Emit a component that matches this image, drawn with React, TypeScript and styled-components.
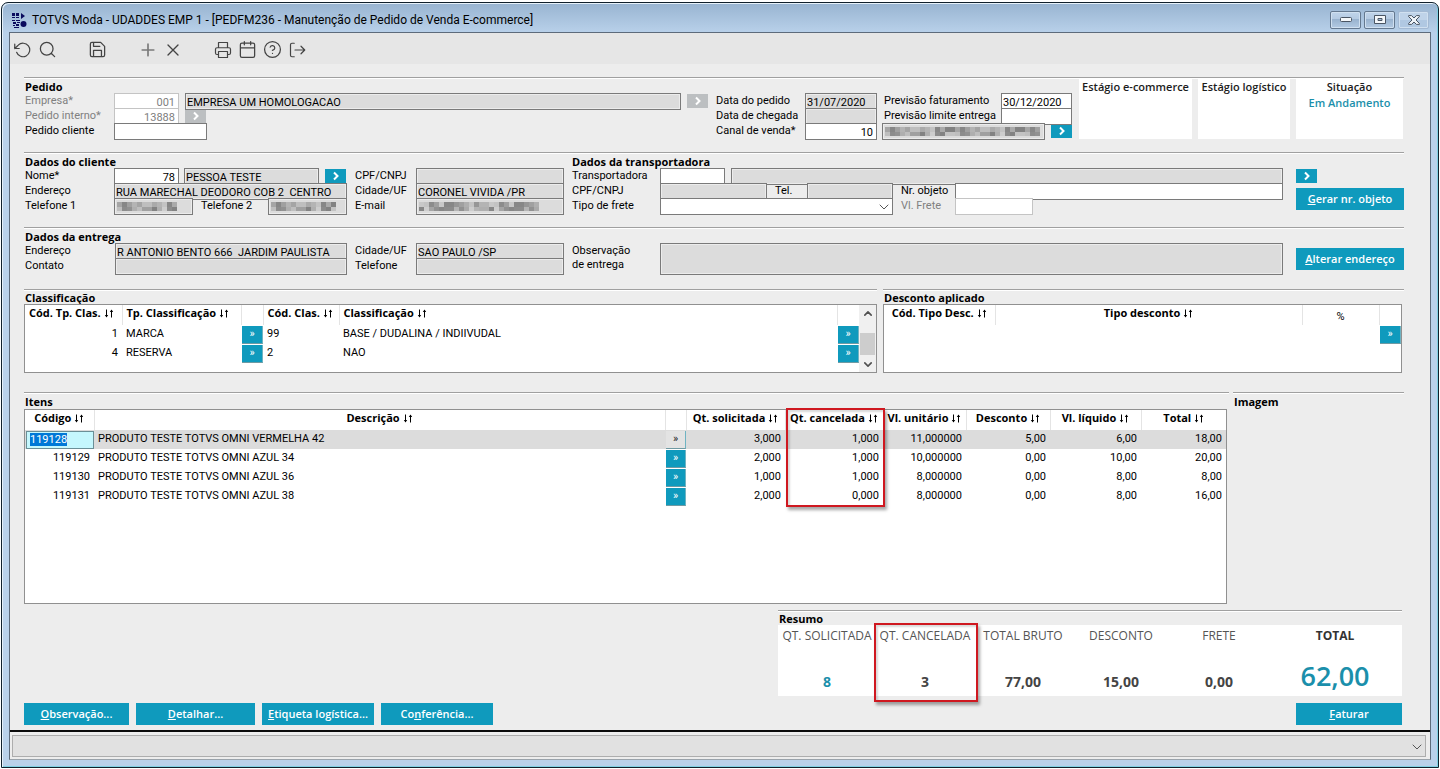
import React, { useEffect, useRef } from 'react';
import styled, { createGlobalStyle, css } from 'styled-components';

const sans = `Roboto, "Liberation Sans", Arial, sans-serif`;
const humanist = `"Open Sans", "Noto Sans", sans-serif`;
const teal = '#0f9abd';

const GlobalStyle = createGlobalStyle`
  *, *::before, *::after { box-sizing: border-box; }
  body { margin: 0; background: #ffffff; color: #000; font: 11px/15px ${sans}; }
  button, input, select, textarea { font: inherit; color: inherit; border-radius: 0; margin: 0; }
`;

/* ---------- window frame ---------- */

const Desktop = styled.div`
  display: flex;
  min-height: 100vh;
  padding: 2px 1px 1px;
`;

const WindowFrame = styled.div`
  flex: 1;
  min-width: 1200px;
  display: flex;
  flex-direction: column;
  padding: 0 7px 7px;
  border: 1px solid #10202c;
  border-radius: 7px 7px 0 0;
  background: linear-gradient(#98b4d1 0, #b9d1ea 30px);
  box-shadow: inset 1px 1px 0 #e6f1fa, inset -1px -1px 0 #7fd0e2;
`;

const TitleBar = styled.header`
  display: flex;
  align-items: center;
  height: 29px;
  padding: 5px 2px 0 3px;
  gap: 5px;
`;

const WindowTitle = styled.h1`
  flex: 1;
  margin: 0;
  font: 400 12px/18px ${sans};
`;

const WindowControls = styled.div`
  display: flex;
  gap: 3px;
`;

const ControlButton = styled.button<{ $soft?: boolean }>`
  display: flex;
  align-items: center;
  justify-content: center;
  width: 31px;
  height: 18px;
  padding: 0;
  border: 1px solid ${p => (p.$soft ? '#a3b9d3' : '#64788f')};
  border-radius: 2px;
  background: ${p =>
    p.$soft
      ? 'linear-gradient(#bfd3e9 50%, #b0c8e2 50%)'
      : 'linear-gradient(#c0d4ea 0%, #b4cae2 45%, #98b2ce 45%, #b3cae3 100%)'};
  box-shadow: inset 0 0 0 1px #d0e0f0;
`;

const Panel = styled.main`
  flex: 1;
  display: flex;
  flex-direction: column;
  border: 1px solid #5d6b7b;
  border-bottom-color: #9aa3ab;
  background: #ededed;
`;

const Toolbar = styled.div`
  display: flex;
  height: 31px;
  padding-top: 2px;
  align-items: center;
  background: #e6e6e6;
`;

const ToolButton = styled.button<{ $spaced?: boolean; $faint?: boolean }>`
  display: flex;
  align-items: center;
  justify-content: center;
  width: 25px;
  height: 25px;
  padding: 0;
  margin-left: ${p => (p.$spaced ? 25 : 0)}px;
  border: 0;
  background: none;
  color: ${p => (p.$faint ? '#7a7a7a' : '#444')};
`;

const Glyph = styled.svg`
  display: block;
  flex: none;
  fill: none;
  stroke: currentColor;
  stroke-linecap: round;
  stroke-linejoin: round;
`;

const Content = styled.div`
  flex: 1;
  display: flex;
  flex-direction: column;
  padding: 13px 26px 5px 14px;
`;

/* ---------- form parts ---------- */

const ruled = css`
  border-top: 1px solid #a0a0a0;
  box-shadow: inset 0 1px 0 #ffffff;
`;

const Section = styled.section<{ $height?: number }>`
  ${ruled}
  display: flex;
  align-items: flex-start;
  min-height: ${p => p.$height ?? 75}px;
`;

const SectionTitle = styled.h2`
  height: 15px;
  margin: 0;
  padding: 1px 0 0 1px;
  font: 700 11px/15px ${humanist};
  white-space: nowrap;
`;

const Column = styled.div<{ $width?: number; $left?: number }>`
  flex: ${p => (p.$width ? `0 0 ${p.$width}px` : '1 1 0')};
  min-width: 0;
  margin-left: ${p => p.$left ?? 0}px;
`;

const Line = styled.div`
  display: flex;
  height: 15px;
`;

const Caption = styled.label<{ $width: number; $muted?: boolean; $indent?: number; $stacked?: boolean }>`
  flex: 0 0 ${p => p.$width}px;
  padding-left: ${p => p.$indent ?? 1}px;
  line-height: ${p => (p.$stacked ? 14 : 16)}px;
  padding-top: ${p => (p.$stacked ? 1 : 0)}px;
  white-space: nowrap;
  color: ${p => (p.$muted ? '#808080' : '#000')};
`;

const fieldLook = css<{ $locked?: boolean; $faint?: boolean }>`
  border: 1px solid ${p => (p.$faint ? '#c4c4c4' : '#7a7a7a')};
  background: ${p => (p.$locked ? '#dcdcdc' : '#ffffff')};
  box-shadow: ${p => (p.$locked ? 'inset 0 0 0 1px #ececec' : 'none')};
  outline: none;
`;

const Field = styled.input<{
  $width?: number;
  $left?: number;
  $locked?: boolean;
  $faint?: boolean;
  $right?: boolean;
}>`
  ${fieldLook}
  position: relative;
  flex: ${p => (p.$width ? `0 0 ${p.$width}px` : '1 1 0')};
  min-width: 0;
  width: ${p => (p.$width ? `${p.$width}px` : 'auto')};
  height: 17px;
  margin-left: ${p => p.$left ?? 0}px;
  padding: 1px ${p => (p.$right ? 3 : 1)}px 0;
  text-align: ${p => (p.$right ? 'right' : 'left')};
  color: ${p => (p.$faint ? '#808080' : '#000')};
`;

const Notes = styled.textarea`
  ${fieldLook}
  flex: 1;
  height: 32px;
  resize: none;
`;

const MaskedBox = styled.div<{ $width: number; $left?: number }>`
  position: relative;
  display: flex;
  flex: 0 0 ${p => p.$width}px;
  min-width: 0;
  height: 17px;
  margin-left: ${p => p.$left ?? 0}px;
`;

const MaskSvg = styled.svg`
  position: absolute;
  left: 3px;
  top: 4px;
`;

const SelectBox = styled.div<{ $width?: number }>`
  position: relative;
  display: flex;
  flex: ${p => (p.$width ? `0 0 ${p.$width}px` : '1')};
`;

const Select = styled.select<{ $bar?: boolean }>`
  flex: 1;
  height: ${p => (p.$bar ? 22 : 17)}px;
  appearance: none;
  border: 1px solid ${p => (p.$bar ? '#adadad' : '#7a7a7a')};
  background: ${p => (p.$bar ? '#e1e1e1' : '#fff')};
`;

const SelectChevron = styled(Glyph)`
  position: absolute;
  right: 4px;
  top: 50%;
  margin-top: -2px;
  pointer-events: none;
  color: #555;
`;

const GoButton = styled.button<{ $left?: number; $off?: boolean }>`
  display: flex;
  align-items: center;
  justify-content: center;
  flex: 0 0 21px;
  width: 21px;
  height: 14px;
  margin: 1px 0 0 ${p => p.$left ?? 0}px;
  padding: 0;
  border: 0;
  background: ${p => (p.$off ? '#bcbfc1' : teal)};
  color: #fff;
`;

const ActionButton = styled.button<{ $width: number; $top?: number }>`
  width: ${p => p.$width}px;
  height: 22px;
  margin-top: ${p => p.$top ?? 0}px;
  padding: 0;
  border: 0;
  background: ${teal};
  color: #fff;
  font: 600 11px/22px ${humanist};
  white-space: nowrap;
`;

const StageCards = styled.div`
  display: grid;
  grid-template-columns: 113px 92px 107px;
  gap: 6px;
  margin: 1px 1px 0 7px;
`;

const StageCard = styled.div`
  height: 60px;
  background: #fff;
  color: #1c1c1c;
  font: 600 11px/16px ${humanist};
  text-align: center;
  white-space: nowrap;
`;

const StageValue = styled.div`
  color: #1b8fab;
`;

/* ---------- grids ---------- */

const Split = styled.div`
  display: flex;
  gap: 6px;
`;

const ItemsSplit = styled.div`
  flex: 1;
  display: flex;
  gap: 4px;
  min-height: 212px;
  margin-top: 19px;
`;

const GridBlock = styled.section<{ $width?: number; $right?: number }>`
  ${ruled}
  display: flex;
  flex-direction: column;
  flex: ${p => (p.$width ? `0 0 ${p.$width}px` : '1 1 0')};
  min-width: 0;
  padding-right: ${p => p.$right ?? 0}px;
`;

const GridTitle = styled.h2<{ $tall?: boolean }>`
  height: ${p => (p.$tall ? 16 : 14)}px;
  margin: 0;
  padding: ${p => (p.$tall ? 1 : 0)}px 0 0 1px;
  font: 700 11px/15px ${humanist};
  white-space: nowrap;
`;

const GridFrame = styled.div<{ $height?: number }>`
  display: flex;
  align-items: stretch;
  flex: ${p => (p.$height ? 'none' : '1')};
  height: ${p => (p.$height ? `${p.$height}px` : 'auto')};
  border: 1px solid #909090;
  background: #fff;
`;

const GridScroll = styled.div`
  flex: 1;
  min-width: 0;
`;

const Table = styled.table`
  width: 100%;
  table-layout: fixed;
  border-collapse: collapse;
`;

const HeadCell = styled.th<{ $start?: boolean; $plain?: boolean }>`
  position: relative;
  height: 20px;
  padding: ${p => (p.$plain ? '2px 2px 0' : p.$start ? '0 0 5px 4px' : '0 2px 5px')};
  border-left: 1px solid #e4e4e4;
  font: ${p => (p.$plain ? `400 11px/15px ${sans}` : `700 11px/15px ${humanist}`)};
  text-align: ${p => (p.$start ? 'left' : 'center')};
  white-space: nowrap;
  &:first-child { border-left: 0; }
`;

const BodyRow = styled.tr<{ $active?: boolean }>`
  height: 19px;
  background: ${p => (p.$active ? '#dcdcdc' : 'transparent')};
`;

const Cell = styled.td<{ $right?: boolean; $flush?: boolean }>`
  height: 19px;
  padding: ${p => (p.$flush ? '0 0 0 1px' : '0 4px 2px')};
  text-align: ${p => (p.$right ? 'right' : 'left')};
  line-height: 15px;
  white-space: nowrap;
`;

const MoreButton = styled.button<{ $off?: boolean }>`
  display: block;
  width: 100%;
  height: 18px;
  padding: 0;
  border: 0;
  border-right: 1px solid #6fb3c2;
  border-bottom: 1px solid #6f9aa3;
  background: ${p => (p.$off ? '#e3e3e3' : teal)};
  color: ${p => (p.$off ? '#222' : '#fff')};
  font: 11px/16px ${sans};
`;

const CodeInput = styled.input`
  display: block;
  width: 100%;
  height: 18px;
  padding: 0 3px;
  border: 1px solid #6b8f97;
  background: #c5f7fd;
  outline: none;
  line-height: 13px;
  &::selection { background: #0078d7; color: #fff; }
`;

const ScrollBar = styled.div`
  display: flex;
  flex-direction: column;
  align-items: center;
  justify-content: space-between;
  width: 17px;
  padding: 6px 1px 5px;
  background: #f0f0f0;
  color: #505050;
`;

const ScrollThumb = styled.div`
  align-self: stretch;
  height: 22px;
  margin-top: 10px;
  background: #cdcdcd;
`;

const highlight = css`
  position: absolute;
  z-index: 2;
  border: 2px solid #cf1820;
  box-shadow: 2px 3px 3px rgba(0, 0, 0, 0.35), inset 2px 2px 2px rgba(0, 0, 0, 0.15);
  pointer-events: none;
`;

const ColumnHighlight = styled.span`
  ${highlight}
  top: -2px;
  left: 0;
  right: -2px;
  height: 99px;
`;

const SummaryHighlight = styled.span`
  ${highlight}
  top: -2px;
  bottom: -6px;
  left: -2px;
  right: -4px;
`;

/* ---------- summary and footer ---------- */

const Bottom = styled.div`
  display: flex;
  justify-content: space-between;
  align-items: flex-end;
  margin-top: 6px;
  padding-right: 2px;
`;

const ButtonRow = styled.div`
  display: flex;
  gap: 7px;
`;

const SummaryBlock = styled.section`
  ${ruled}
  display: flex;
  flex-direction: column;
  width: 624px;
`;

const SummaryGrid = styled.dl`
  display: grid;
  grid-template-columns: repeat(5, 98px) 1fr;
  margin: 0 0 7px;
  background: #fff;
`;

const SummaryItem = styled.div`
  position: relative;
  height: 71px;
  display: flex;
  flex-direction: column;
  justify-content: space-between;
  align-items: center;
  padding: 2px 0 4px;
  font-family: ${humanist};
`;

const SummaryLabel = styled.dt<{ $strong?: boolean }>`
  font-size: 12px;
  line-height: 17px;
  font-weight: ${p => (p.$strong ? 700 : 400)};
  color: ${p => (p.$strong ? '#333' : '#555')};
  white-space: nowrap;
`;

const SummaryValue = styled.dd<{ $accent?: boolean; $large?: boolean }>`
  margin: 0;
  font-size: ${p => (p.$large ? 27 : 14)}px;
  line-height: ${p => (p.$large ? 32 : 20)}px;
  font-weight: ${p => (p.$large ? 600 : 700)};
  color: ${p => (p.$accent ? '#1b8fab' : '#444')};
`;

const FaturarRow = styled.div`
  display: flex;
  justify-content: flex-end;
`;

const StatusBar = styled.footer`
  display: flex;
  padding: 3px 4px 2px 2px;
  border-top: 2px solid #0a0a0a;
`;

/* ---------- small pieces ---------- */

const Arrow = () => (
  <Glyph width="8" height="10" viewBox="0 0 8 10" strokeWidth="2">
    <path d="M2 1.5 5.5 5 2 8.5" strokeLinecap="butt" strokeLinejoin="miter" />
  </Glyph>
);

const Chevron = ({ up = false }: { up?: boolean }) => (
  <Glyph width="8" height="5" viewBox="0 0 10 6" strokeWidth="2">
    <path d={up ? 'M1 5 5 1 9 5' : 'M1 1 5 5 9 1'} />
  </Glyph>
);

const SortMark = styled.svg`
  margin-left: 3px;
  vertical-align: -1px;
`;

const Sort = () => (
  <SortMark width="10" height="9" viewBox="0 0 10 9" aria-hidden="true">
    <path d="M2.5 0.5V8M7.5 8.5V1" stroke="#000" strokeWidth="1" />
    <path d="M0.8 6h3.4L2.5 8.5zM5.8 3h3.4L7.5 0.5z" fill="#000" />
  </SortMark>
);

const Go = ({ label, left, off }: { label: string; left?: number; off?: boolean }) => (
  <GoButton type="button" aria-label={label} $left={left} $off={off}>
    <Arrow />
  </GoButton>
);

const shades = [190, 150, 170, 205, 140, 160, 180, 130, 200, 165, 145, 175, 195, 135];

function Masked({ id, label, width, left, cover }: {
  id: string; label?: string; width: number; left?: number; cover: number;
}) {
  const cells = [];
  for (let row = 0; row < 2; row++) {
    for (let col = 0; col * 5 < cover; col++) {
      const v = shades[(col * 3 + row * 5 + ((col * col) % 7) + width) % shades.length];
      cells.push(
        <rect key={`${row}-${col}`} x={col * 5} y={row * 5} width="5" height="5" fill={`rgb(${v},${v},${v})`} />
      );
    }
  }
  return (
    <MaskedBox $width={width} $left={left}>
      <Field id={id} aria-label={label} readOnly $locked />
      <MaskSvg width={cover} height="9" shapeRendering="crispEdges" aria-hidden="true">{cells}</MaskSvg>
    </MaskedBox>
  );
}

function Head({ children, start, marked }: { children: string; start?: boolean; marked?: boolean }) {
  return (
    <HeadCell $start={start}>
      {children}
      <Sort />
      {marked && <ColumnHighlight />}
    </HeadCell>
  );
}

type Tool = { name: string; size: number; d: string; spaced?: boolean; faint?: boolean };

const tools: Tool[] = [
  { name: 'Desfazer', size: 18, d: 'M1 4v6h6M3.5 15a9 9 0 1 0 2.1-9.4L1 10' },
  { name: 'Pesquisar', size: 19, d: 'M19 11a8 8 0 1 1-16 0 8 8 0 0 1 16 0zM21 21l-4.3-4.3' },
  { name: 'Salvar', size: 19, spaced: true, d: 'M19 21H5a2 2 0 0 1-2-2V5a2 2 0 0 1 2-2h11l5 5v11a2 2 0 0 1-2 2zM17 21v-8H7v8M7 3v5h8' },
  { name: 'Incluir', size: 20, spaced: true, faint: true, d: 'M12 5v14M5 12h14' },
  { name: 'Excluir', size: 20, d: 'M18 6 6 18M6 6l12 12' },
  { name: 'Imprimir', size: 18, spaced: true, d: 'M6 9V2h12v7M6 18H4a2 2 0 0 1-2-2v-5a2 2 0 0 1 2-2h16a2 2 0 0 1 2 2v5a2 2 0 0 1-2 2h-2M6 14h12v8H6z' },
  { name: 'Agenda', size: 19, d: 'M5 4h14a2 2 0 0 1 2 2v14a2 2 0 0 1-2 2H5a2 2 0 0 1-2-2V6a2 2 0 0 1 2-2zM16 2v4M8 2v4M3 10h18' },
  { name: 'Ajuda', size: 19, d: 'M22 12a10 10 0 1 1-20 0 10 10 0 0 1 20 0zM9.1 9a3 3 0 0 1 5.8 1c0 2-3 3-3 3M12 17h.01' },
  { name: 'Sair', size: 18, d: 'M7 21H4a2 2 0 0 1-2-2V5a2 2 0 0 1 2-2h3M16 17l5-5-5-5M21 12H8' },
];

const items = [
  ['119128', 'PRODUTO TESTE TOTVS OMNI VERMELHA 42', '3,000', '1,000', '11,000000', '5,00', '6,00', '18,00'],
  ['119129', 'PRODUTO TESTE TOTVS OMNI AZUL 34', '2,000', '1,000', '10,000000', '0,00', '10,00', '20,00'],
  ['119130', 'PRODUTO TESTE TOTVS OMNI AZUL 36', '1,000', '1,000', '8,000000', '0,00', '8,00', '8,00'],
  ['119131', 'PRODUTO TESTE TOTVS OMNI AZUL 38', '2,000', '0,000', '8,000000', '0,00', '8,00', '16,00'],
];

const classes = [
  ['1', 'MARCA', '99', 'BASE / DUDALINA / INDIIVUDAL'],
  ['4', 'RESERVA', '2', 'NAO'],
];

const summary = [
  { label: 'QT. SOLICITADA', value: '8', accent: true },
  { label: 'QT. CANCELADA', value: '3', marked: true },
  { label: 'TOTAL BRUTO', value: '77,00' },
  { label: 'DESCONTO', value: '15,00' },
  { label: 'FRETE', value: '0,00' },
  { label: 'TOTAL', value: '62,00', accent: true, large: true },
];

function AppLogo() {
  return (
    <svg width="15" height="15" viewBox="0 0 15 15" fill="#0b0b5e" aria-hidden="true">
      <path d="M0 0h3v3H0zM4 0h3v3H4zM0 4h3v1H0zM4 4h3v1H4zM9 0l4 3-4 3zM0 7h3v1H0zM4 7h4v1H4zM1 9h3v2H1zM5 9h3v1H5zM1 12h2v1H1zM4 11h3v2H4zM2 14h5v1H2z" />
      <circle cx="11.500" cy="11" r="3" />
    </svg>
  );
}

export default function App() {
  const code = useRef<HTMLInputElement>(null);
  useEffect(() => {
    code.current?.focus();
    code.current?.select();
  }, []);

  return (
    <Desktop>
      <GlobalStyle />
      <WindowFrame>
        <TitleBar>
          <AppLogo />
          <WindowTitle>TOTVS Moda - UDADDES EMP 1 - [PEDFM236 - Manutenção de Pedido de Venda E-commerce]</WindowTitle>
          <WindowControls>
            <ControlButton type="button" aria-label="Minimizar">
              <svg width="12" height="6"><rect x="0.5" y="0.5" width="11" height="4" rx="1" fill="#f4f7fa" stroke="#4a5563" /></svg>
            </ControlButton>
            <ControlButton type="button" aria-label="Restaurar">
              <svg width="12" height="10"><path d="M.5.5h11v8H.5z" fill="#f4f7fa" stroke="#4a5563" /><path d="M4 3.500h4v2H4z" fill="#a9c0da" stroke="#4a5563" /></svg>
            </ControlButton>
            <ControlButton type="button" aria-label="Fechar" $soft>
              <svg width="12" height="10" viewBox="0 0 12 10"><path d="M.6.6h3L6 3 8.400.6h3v1L8 5l3.400 3.400v1h-3L6 7 3.600 9.400h-3v-1L4 5 .6 1.600z" fill="#eef3f8" stroke="#4a5563" /></svg>
            </ControlButton>
          </WindowControls>
        </TitleBar>

        <Panel>
          <Toolbar>
            {tools.map(t => (
              <ToolButton key={t.name} type="button" aria-label={t.name} $spaced={t.spaced} $faint={t.faint}>
                <Glyph width={t.size} height={t.size} viewBox="0 0 24 24" strokeWidth={t.faint ? 2 : 1.6}>
                  <path d={t.d} />
                </Glyph>
              </ToolButton>
            ))}
          </Toolbar>

          <Content>
            <Section>
              <Column>
                <SectionTitle>Pedido</SectionTitle>
                <Line>
                  <Caption htmlFor="empresa" $width={90} $muted>Empresa*</Caption>
                  <Field id="empresa" $width={65} $right $faint defaultValue="001" />
                  <Field aria-label="Nome da empresa" $left={6} $locked readOnly defaultValue="EMPRESA UM HOMOLOGACAO" />
                  <Go label="Abrir empresa" left={6} off />
                </Line>
                <Line>
                  <Caption htmlFor="interno" $width={90} $muted>Pedido interno*</Caption>
                  <Field id="interno" $width={65} $right $faint defaultValue="13888" />
                  <Go label="Abrir pedido" left={6} off />
                </Line>
                <Line>
                  <Caption htmlFor="pcliente" $width={90}>Pedido cliente</Caption>
                  <Field id="pcliente" $width={93} />
                </Line>
              </Column>
              <Column $width={357} $left={7}>
                <SectionTitle as="div" />
                <Line>
                  <Caption htmlFor="dpedido" $width={90}>Data do pedido</Caption>
                  <Field id="dpedido" $width={72} $locked readOnly defaultValue="31/07/2020" />
                  <Caption htmlFor="pfat" $width={124} $indent={7}>Previsão faturamento</Caption>
                  <Field id="pfat" defaultValue="30/12/2020" />
                </Line>
                <Line>
                  <Caption htmlFor="dchegada" $width={90}>Data de chegada</Caption>
                  <Field id="dchegada" $width={72} $locked readOnly />
                  <Caption htmlFor="plim" $width={124} $indent={7}>Previsão limite entrega</Caption>
                  <Field id="plim" />
                </Line>
                <Line>
                  <Caption htmlFor="canal" $width={90}>Canal de venda*</Caption>
                  <Field id="canal" $width={72} $right defaultValue="10" />
                  <Masked id="canaldesc" label="Descrição do canal" width={163} left={5} cover={155} />
                  <Go label="Abrir canal" left={6} />
                </Line>
              </Column>
              <StageCards>
                <StageCard>Estágio e-commerce</StageCard>
                <StageCard>Estágio logístico</StageCard>
                <StageCard>
                  Situação
                  <StageValue>Em Andamento</StageValue>
                </StageCard>
              </StageCards>
            </Section>

            <Section>
              <Column $width={323}>
                <SectionTitle>Dados do cliente</SectionTitle>
                <Line>
                  <Caption htmlFor="nome" $width={90}>Nome*</Caption>
                  <Field id="nome" $width={65} $right defaultValue="78" />
                  <Field aria-label="Nome do cliente" $left={5} $width={135} $locked readOnly defaultValue="PESSOA TESTE" />
                  <Go label="Abrir cliente" left={6} />
                </Line>
                <Line>
                  <Caption htmlFor="end" $width={90}>Endereço</Caption>
                  <Field id="end" $locked readOnly defaultValue="RUA MARECHAL DEODORO COB 2  CENTRO" />
                </Line>
                <Line>
                  <Caption htmlFor="tel1" $width={90}>Telefone 1</Caption>
                  <Masked id="tel1" width={79} cover={60} />
                  <Caption htmlFor="tel2" $width={75} $indent={8}>Telefone 2</Caption>
                  <Masked id="tel2" width={79} cover={65} />
                </Line>
              </Column>
              <Column $width={210} $left={7}>
                <SectionTitle as="div" />
                <Line>
                  <Caption htmlFor="cpf" $width={62}>CPF/CNPJ</Caption>
                  <Field id="cpf" $locked readOnly />
                </Line>
                <Line>
                  <Caption htmlFor="cid" $width={62}>Cidade/UF</Caption>
                  <Field id="cid" $locked readOnly defaultValue="CORONEL VIVIDA /PR" />
                </Line>
                <Line>
                  <Caption htmlFor="mail" $width={62}>E-mail</Caption>
                  <Masked id="mail" width={148} cover={120} />
                </Line>
              </Column>
              <Column $left={7}>
                <SectionTitle>Dados da transportadora</SectionTitle>
                <Line>
                  <Caption htmlFor="transp" $width={89}>Transportadora</Caption>
                  <Field id="transp" $width={65} />
                  <Field aria-label="Nome da transportadora" $left={6} $locked readOnly />
                </Line>
                <Line>
                  <Caption htmlFor="tcpf" $width={89}>CPF/CNPJ</Caption>
                  <Field id="tcpf" $width={107} $locked readOnly />
                  <Caption htmlFor="ttel" $width={40} $indent={8}>Tel.</Caption>
                  <Field id="ttel" $width={86} $locked readOnly />
                  <Caption htmlFor="objeto" $width={62} $indent={8}>Nr. objeto</Caption>
                  <Field id="objeto" />
                </Line>
                <Line>
                  <Caption htmlFor="frete" $width={89}>Tipo de frete</Caption>
                  <SelectBox $width={233}>
                    <Select id="frete" />
                    <SelectChevron width="10" height="6" viewBox="0 0 10 6" strokeWidth="1"><path d="M1 1 5 5 9 1" /></SelectChevron>
                  </SelectBox>
                  <Caption htmlFor="vfrete" $width={62} $muted $indent={8}>Vl. Frete</Caption>
                  <Field id="vfrete" $width={78} $faint />
                </Line>
              </Column>
              <Column $width={108} $left={13}>
                <SectionTitle as="div" />
                <Line><Go label="Abrir transportadora" /></Line>
                <ActionButton type="button" $width={108} $top={5}><u>G</u>erar nr. objeto</ActionButton>
              </Column>
            </Section>

            <Section $height={62}>
              <Column $width={323}>
                <SectionTitle>Dados da entrega</SectionTitle>
                <Line>
                  <Caption htmlFor="eend" $width={91}>Endereço</Caption>
                  <Field id="eend" $locked readOnly defaultValue="R ANTONIO BENTO 666  JARDIM PAULISTA" />
                </Line>
                <Line>
                  <Caption htmlFor="econt" $width={91}>Contato</Caption>
                  <Field id="econt" $locked readOnly />
                </Line>
              </Column>
              <Column $width={210} $left={7}>
                <SectionTitle as="div" />
                <Line>
                  <Caption htmlFor="ecid" $width={62}>Cidade/UF</Caption>
                  <Field id="ecid" $locked readOnly defaultValue="SAO PAULO /SP" />
                </Line>
                <Line>
                  <Caption htmlFor="etel" $width={62}>Telefone</Caption>
                  <Field id="etel" $locked readOnly />
                </Line>
              </Column>
              <Column $left={7}>
                <SectionTitle as="div" />
                <Line>
                  <Caption htmlFor="obs" $width={89} $stacked>Observação<br />de entrega</Caption>
                  <Notes id="obs" $locked readOnly />
                </Line>
              </Column>
              <Column $width={108} $left={13}>
                <ActionButton type="button" $width={108} $top={20}><u>A</u>lterar endereço</ActionButton>
              </Column>
            </Section>

            <Split>
              <GridBlock>
                <GridTitle>Classificação</GridTitle>
                <GridFrame $height={69}>
                  <GridScroll>
                    <Table>
                      <colgroup>
                        <col style={{ width: 97 }} /><col style={{ width: 119 }} /><col style={{ width: 22 }} />
                        <col style={{ width: 76 }} /><col /><col style={{ width: 22 }} />
                      </colgroup>
                      <thead>
                        <tr>
                          <Head start>Cód. Tp. Clas.</Head>
                          <Head start>Tp. Classificação</Head>
                          <HeadCell />
                          <Head start>Cód. Clas.</Head>
                          <Head start>Classificação</Head>
                          <HeadCell />
                        </tr>
                      </thead>
                      <tbody>
                        {classes.map(([tp, tpName, cod, name]) => (
                          <BodyRow key={tp}>
                            <Cell $right>{tp}</Cell>
                            <Cell>{tpName}</Cell>
                            <Cell $flush><MoreButton type="button">»</MoreButton></Cell>
                            <Cell>{cod}</Cell>
                            <Cell>{name}</Cell>
                            <Cell $flush><MoreButton type="button">»</MoreButton></Cell>
                          </BodyRow>
                        ))}
                      </tbody>
                    </Table>
                  </GridScroll>
                  <ScrollBar>
                    <Chevron up />
                    <ScrollThumb />
                    <Chevron />
                  </ScrollBar>
                </GridFrame>
              </GridBlock>
              <GridBlock $width={521} $right={2}>
                <GridTitle>Desconto aplicado</GridTitle>
                <GridFrame $height={69}>
                  <GridScroll>
                    <Table>
                      <colgroup>
                        <col style={{ width: 111 }} /><col /><col style={{ width: 77 }} /><col style={{ width: 22 }} />
                      </colgroup>
                      <thead>
                        <tr>
                          <Head>Cód. Tipo Desc.</Head>
                          <Head>Tipo desconto</Head>
                          <HeadCell $plain>%</HeadCell>
                          <HeadCell />
                        </tr>
                      </thead>
                      <tbody>
                        <BodyRow>
                          <Cell /><Cell /><Cell />
                          <Cell $flush><MoreButton type="button">»</MoreButton></Cell>
                        </BodyRow>
                      </tbody>
                    </Table>
                  </GridScroll>
                </GridFrame>
              </GridBlock>
            </Split>

            <ItemsSplit>
              <GridBlock $right={2}>
                <GridTitle $tall>Itens</GridTitle>
                <GridFrame>
                  <GridScroll>
                    <Table>
                      <colgroup>
                        <col style={{ width: 69 }} /><col /><col style={{ width: 21 }} /><col style={{ width: 99 }} />
                        <col style={{ width: 98 }} /><col style={{ width: 83 }} /><col style={{ width: 84 }} />
                        <col style={{ width: 91 }} /><col style={{ width: 85 }} />
                      </colgroup>
                      <thead>
                        <tr>
                          <Head>Código</Head>
                          <Head>Descrição</Head>
                          <HeadCell />
                          <Head>Qt. solicitada</Head>
                          <Head marked>Qt. cancelada</Head>
                          <Head>Vl. unitário</Head>
                          <Head>Desconto</Head>
                          <Head>Vl. líquido</Head>
                          <Head>Total</Head>
                        </tr>
                      </thead>
                      <tbody>
                        {items.map(([cod, name, ...values], i) => (
                          <BodyRow key={cod} $active={i === 0}>
                            {i === 0 ? (
                              <Cell $flush><CodeInput ref={code} aria-label="Código" defaultValue={cod} /></Cell>
                            ) : (
                              <Cell $right>{cod}</Cell>
                            )}
                            <Cell>{name}</Cell>
                            <Cell $flush><MoreButton type="button" $off={i === 0}>»</MoreButton></Cell>
                            {values.map((v, k) => <Cell key={k} $right>{v}</Cell>)}
                          </BodyRow>
                        ))}
                      </tbody>
                    </Table>
                  </GridScroll>
                </GridFrame>
              </GridBlock>
              <GridBlock $width={171}>
                <GridTitle $tall>Imagem</GridTitle>
              </GridBlock>
            </ItemsSplit>

            <Bottom>
              <ButtonRow>
                <ActionButton type="button" $width={105}><u>O</u>bservação...</ActionButton>
                <ActionButton type="button" $width={119}><u>D</u>etalhar...</ActionButton>
                <ActionButton type="button" $width={112}><u>E</u>tiqueta logística...</ActionButton>
                <ActionButton type="button" $width={112}>Co<u>n</u>ferência...</ActionButton>
              </ButtonRow>
              <SummaryBlock>
                <GridTitle>Resumo</GridTitle>
                <SummaryGrid>
                  {summary.map(s => (
                    <SummaryItem key={s.label}>
                      <SummaryLabel $strong={s.large}>{s.label}</SummaryLabel>
                      <SummaryValue $accent={s.accent} $large={s.large}>{s.value}</SummaryValue>
                      {s.marked && <SummaryHighlight />}
                    </SummaryItem>
                  ))}
                </SummaryGrid>
                <FaturarRow>
                  <ActionButton type="button" $width={106}><u>F</u>aturar</ActionButton>
                </FaturarRow>
              </SummaryBlock>
            </Bottom>
          </Content>

          <StatusBar>
            <SelectBox>
              <Select $bar aria-label="Mensagens" />
              <SelectChevron width="10" height="6" viewBox="0 0 10 6" strokeWidth="1"><path d="M1 1 5 5 9 1" /></SelectChevron>
            </SelectBox>
          </StatusBar>
        </Panel>
      </WindowFrame>
    </Desktop>
  );
}
